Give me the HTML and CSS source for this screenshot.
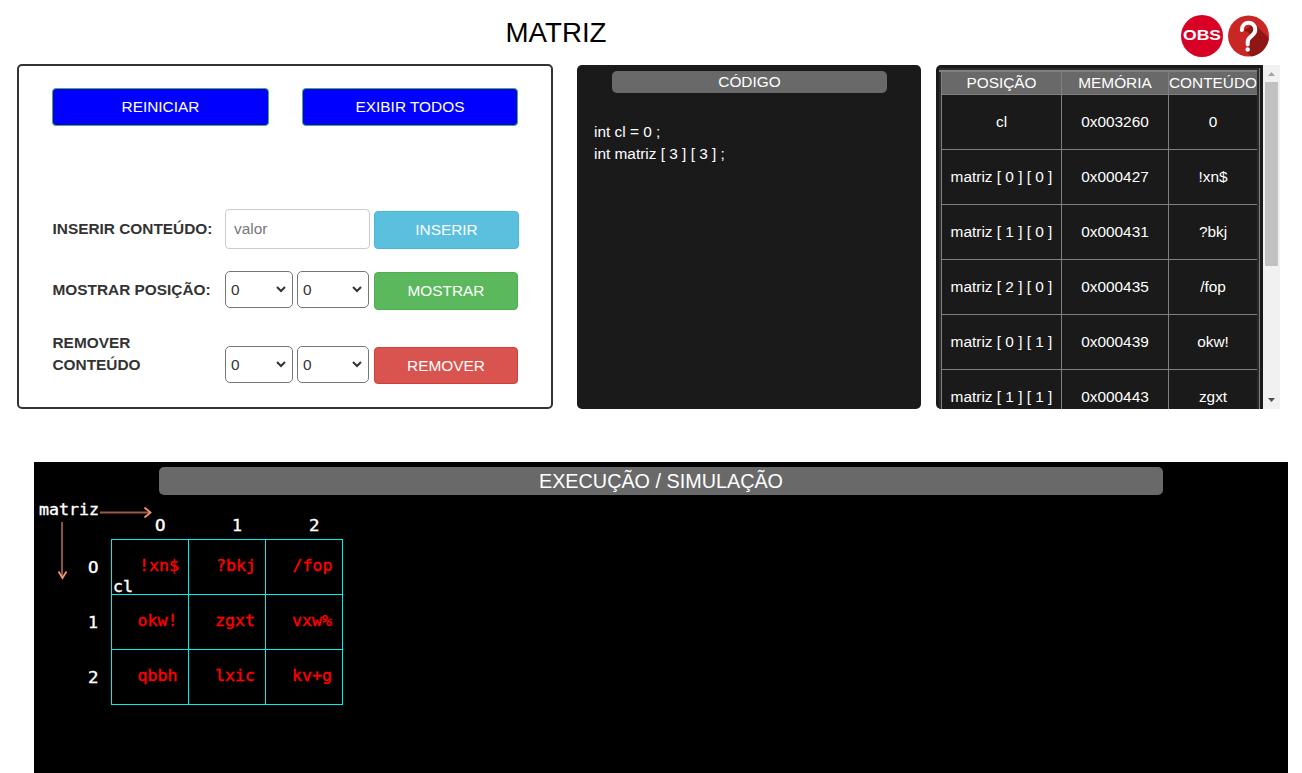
FILE: index.html
```html
<!DOCTYPE html>
<html lang="pt-BR">
<head>
<meta charset="utf-8">
<title>Matriz</title>
<link rel="stylesheet" href="styles.css">
</head>
<body>
<header class="header">
  <h1 class="title">MATRIZ</h1>
  <div class="actions">
    <svg class="icon" width="42" height="42" viewBox="0 0 42 42"><circle cx="21" cy="21" r="21" fill="#d80025"/><text class="obs" x="21" y="25" textLength="38" lengthAdjust="spacingAndGlyphs">OBS</text></svg>
    <svg class="icon" width="41" height="42" viewBox="0 0 41 42"><defs><clipPath id="disc"><circle cx="20.5" cy="21" r="20.5"/></clipPath></defs><circle cx="20.5" cy="21" r="20.5" fill="#cb2626"/><path clip-path="url(#disc)" d="M26.500 9L50 32.500V52H33L18 36L20 28L24 20L16 15Z" fill="#901616"/><path d="M13.800 15C13.800 5.500 27.300 5.500 27.300 14.800C27.300 21.500 19.700 20.700 19.700 27V29.500" fill="none" stroke="#fff" stroke-width="4" stroke-linecap="round" stroke-linejoin="round"/><circle cx="19.700" cy="34.500" r="2.200" fill="#fff"/></svg>
  </div>
</header>
<main>
  <div class="panels">
    <section class="controls">
      <div class="top-buttons"><button class="btn blue">REINICIAR</button><button class="btn blue">EXIBIR TODOS</button></div>
      <div class="row insert"><label>INSERIR CONTEÚDO:</label><input class="field" placeholder="valor"><button class="btn info">INSERIR</button></div>
      <div class="row show"><label>MOSTRAR POSIÇÃO:</label>
        <div class="select first">0<svg width="10" height="7" viewBox="0 0 10 7"><path d="M1 1L5 5L9 1"/></svg></div>
        <div class="select">0<svg width="10" height="7" viewBox="0 0 10 7"><path d="M1 1L5 5L9 1"/></svg></div>
        <button class="btn success">MOSTRAR</button></div>
      <div class="row remove"><label>REMOVER CONTEÚDO</label>
        <div class="select first">0<svg width="10" height="7" viewBox="0 0 10 7"><path d="M1 1L5 5L9 1"/></svg></div>
        <div class="select">0<svg width="10" height="7" viewBox="0 0 10 7"><path d="M1 1L5 5L9 1"/></svg></div>
        <button class="btn danger">REMOVER</button></div>
    </section>
    <section class="code">
      <h2 class="bar">CÓDIGO</h2>
      <p>int cl = 0 ;<br>int matriz [ 3 ] [ 3 ] ;</p>
    </section>
    <section class="memory">
      <div class="frame">
        <table>
          <colgroup><col class="c1"><col class="c2"><col class="c3"></colgroup>
          <tr><th>POSIÇÃO</th><th>MEMÓRIA</th><th>CONTEÚDO</th></tr>
          <tr><td>cl</td><td>0x003260</td><td>0</td></tr>
          <tr><td>matriz [ 0 ] [ 0 ]</td><td>0x000427</td><td>!xn$</td></tr>
          <tr><td>matriz [ 1 ] [ 0 ]</td><td>0x000431</td><td>?bkj</td></tr>
          <tr><td>matriz [ 2 ] [ 0 ]</td><td>0x000435</td><td>/fop</td></tr>
          <tr><td>matriz [ 0 ] [ 1 ]</td><td>0x000439</td><td>okw!</td></tr>
          <tr><td>matriz [ 1 ] [ 1 ]</td><td>0x000443</td><td>zgxt</td></tr>
        </table>
      </div>
      <div class="scrollbar"><svg width="17" height="17"><path d="M5 11L8.500 7L12 11Z" fill="#a3a3a3"/></svg><div class="thumb"></div><svg width="17" height="17"><path d="M5 6L8.500 10L12 6Z" fill="#505050"/></svg></div>
    </section>
  </div>
  <section class="simulation">
    <h2 class="bar">EXECUÇÃO / SIMULAÇÃO</h2>
    <svg class="diagram" width="1254" height="278" viewBox="34 495 1254 278">
      <g class="arrows"><path d="M100 512.500H150M62 522V578"/><path class="head" d="M144.500 507.500L150.500 512.500L144.500 517.500M58.500 571.500L62.500 578L66.500 571.500"/></g>
      <path class="grid" d="M111.500 539.500H342.500V704.500H111.500ZM188.500 539.500V704.500M265.500 539.500V704.500M111.500 594.500H342.500M111.500 649.500H342.500"/>
      <g class="labels">
        <text x="39" y="515" textLength="60" lengthAdjust="spacingAndGlyphs">matriz</text>
        <text x="155" y="531" textLength="10.500" lengthAdjust="spacingAndGlyphs">O</text><text x="232" y="531" textLength="10" lengthAdjust="spacingAndGlyphs">1</text><text x="309" y="531" textLength="10.500" lengthAdjust="spacingAndGlyphs">2</text>
        <text x="88" y="573" textLength="10.500" lengthAdjust="spacingAndGlyphs">O</text><text x="88" y="628" textLength="10" lengthAdjust="spacingAndGlyphs">1</text><text x="88" y="683" textLength="10.500" lengthAdjust="spacingAndGlyphs">2</text>
        <text x="113" y="592" textLength="20" lengthAdjust="spacingAndGlyphs">cl</text>
      </g>
      <g class="values">
        <text x="139" y="571" textLength="40" lengthAdjust="spacingAndGlyphs">!xn$</text><text x="216" y="571" textLength="40" lengthAdjust="spacingAndGlyphs">?bkj</text><text x="292.500" y="571" textLength="40" lengthAdjust="spacingAndGlyphs">/fop</text>
        <text x="137.500" y="626" textLength="40" lengthAdjust="spacingAndGlyphs">okw!</text><text x="215" y="626" textLength="40" lengthAdjust="spacingAndGlyphs">zgxt</text><text x="292" y="626" textLength="40" lengthAdjust="spacingAndGlyphs">vxw%</text>
        <text x="137.500" y="681" textLength="40" lengthAdjust="spacingAndGlyphs">qbbh</text><text x="215" y="681" textLength="40" lengthAdjust="spacingAndGlyphs">lxic</text><text x="292" y="681" textLength="40" lengthAdjust="spacingAndGlyphs">kv+g</text>
      </g>
    </svg>
  </section>
</main>
</body>
</html>
```
FILE: styles.css
```css
* { box-sizing: border-box; }
body { margin: 0; height: 773px; overflow: hidden; background: #fff; color: #333; font: 15.4px/22px "Liberation Sans", Arial, sans-serif; }
h1, h2, p { margin: 0; font-weight: 400; }
.header { display: flex; justify-content: space-between; height: 64px; padding: 15px 33px 0 505.5px; }
.title { color: #000; font-size: 27.7px; line-height: 36px; }
.actions { display: flex; gap: 5px; }
.icon { display: block; }
.obs { fill: #fff; font-size: 15.5px; font-weight: 700; text-anchor: middle; }
.panels { display: flex; height: 345px; padding-left: 17px; }
.controls { width: 536px; height: 345px; border: 2px solid #333; border-radius: 5px; padding: 22px 33px 0 33px; }
.btn { height: 38px; padding: 0; border: 1px solid; border-radius: 4px; color: #fff; font: inherit; text-align: center; }
.top-buttons { display: flex; gap: 33px; }
.top-buttons .btn { width: 217px; }
.top-buttons .btn + .btn { width: 216px; }
.blue { background: #00f; border-color: #4cae4c; }
.info { width: 145px; background: #5bc0de; border-color: #46b8da; }
.success { width: 144px; background: #5cb85c; border-color: #4cae4c; }
.danger { width: 144px; background: #d9534f; border-color: #d43f3a; }
.row { display: flex; }
.row label { width: 173px; flex: none; padding-left: .5px; font-weight: 700; }
.row .btn { margin-left: auto; }
.insert { height: 40px; margin: 83px -1px 0 0; align-items: end; }
.insert label { align-self: center; }
.field { width: 145px; height: 40px; border: 1px solid #ccc; border-radius: 4px; padding: 0 8px; font: inherit; }
.field::placeholder { color: #777; }
.show { height: 39px; margin-top: 22px; }
.show label { padding-top: 8px; }
.show .btn { margin-top: 1px; }
.select { display: flex; align-items: center; justify-content: space-between; width: 72px; height: 37px; border: 1px solid #767676; border-radius: 5px; padding: 0 6px 0 5px; }
.select.first { width: 68px; margin-right: 4px; }
.select svg path { fill: none; stroke: #333; stroke-width: 2; }
.remove { height: 52px; margin-top: 22px; align-items: flex-end; }
.remove label { align-self: flex-start; padding-right: 50px; }
.remove .btn { height: 37px; }
.remove .select { margin-bottom: 1px; }
.code { width: 344px; height: 344px; margin: 1px 15px 0 24px; border-radius: 5px; background: #1a1a1a; color: #fff; padding: 6px 17px 0; }
.bar { background: #696969; color: #fff; text-align: center; border-radius: 5px; }
.code .bar { width: 275px; margin: 0 auto 28px 18px; font-size: 15.4px; line-height: 22px; }
.memory { display: flex; width: 344px; height: 344px; margin-top: 1px; border-radius: 5px 0 0 5px; background: #1a1a1a; overflow: hidden; color: #fff; }
.frame { width: 321px; height: 341px; margin: 3px 3px 0 3px; border-right: 1px solid gray; background: #2b2b2b; padding-top: 2px; }
.frame::before { content: ""; display: block; width: 318px; height: 2px; background: gray; }
table { width: 316px; margin-left: 2px; table-layout: fixed; border-collapse: separate; border-spacing: 0; border-left: 1px solid gray; background: #1a1a1a; }
.c1 { width: 120px; }
.c2 { width: 107px; }
.c3 { width: 88px; }
th, td { padding: 0; font-weight: 400; text-align: center; border-right: 1px solid gray; border-bottom: 1px solid gray; white-space: nowrap; }
th:last-child, td:last-child { border-right: 0; }
th { height: 23px; background: #696969; }
td { height: 55px; }
.scrollbar { display: flex; flex-direction: column; width: 17px; background: #f1f1f1; }
.scrollbar svg { display: block; }
.thumb { width: 13px; height: 184px; margin: 0 2px auto; background: #c1c1c1; }
.simulation { width: 1254px; height: 311px; margin: 53px 0 0 34px; background: #000; padding-top: 5px; }
.simulation .bar { width: 1004px; margin-left: 125px; font-size: 19.8px; line-height: 28px; }
.diagram { display: block; font-family: "DejaVu Sans Mono", monospace; font-size: 15px; }
.labels { fill: #fff; stroke: #fff; stroke-width: .35; }
.values { fill: #f00; stroke: #f00; stroke-width: .35; }
.grid { fill: none; stroke: #00f0f0; shape-rendering: crispEdges; }
.arrows path { fill: none; stroke: #9c5d48; stroke-width: 1.8; }
.arrows .head { stroke: #f4926f; }
```
